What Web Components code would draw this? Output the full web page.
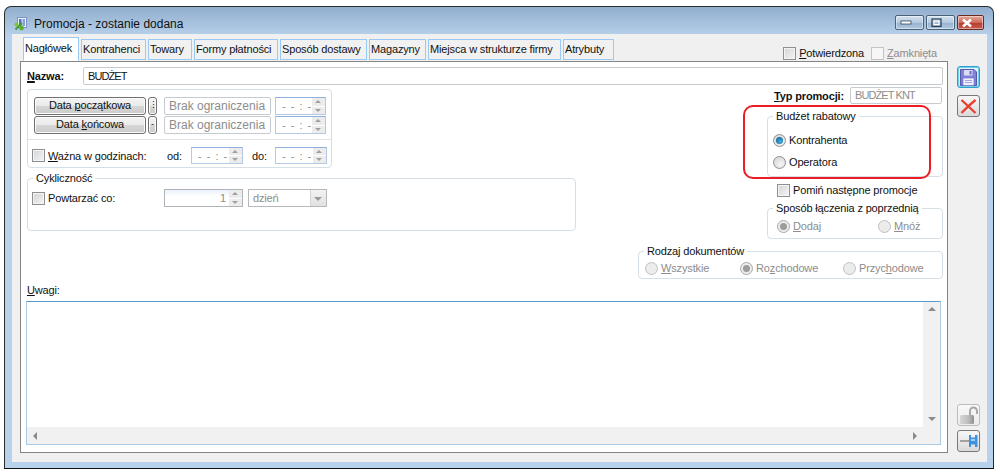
<!DOCTYPE html>
<html lang="pl">
<head>
<meta charset="utf-8">
<title>Promocja</title>
<style>
    html, body { margin: 0; background: #fff; }
    body { font: 11px "Liberation Sans", sans-serif; letter-spacing: -.15px; color: #111; }
</style>
</head>
<body>
<promo-window></promo-window>
<script>
    // small helper, every control below is the same few lines
    function control(name, css, render) {
        customElements.define(name, class extends HTMLElement {
            connectedCallback() {
                if (this.shadowRoot) return;
                this.attachShadow({mode: 'open'}).innerHTML = '<style>' + css + '</style>' + render(this);
            }
        });
    }

    var arrows = '<i class="up"></i><i class="down"></i>';

    control('x-check', `
        :host { display: inline-flex; align-items: center; gap: 3px; line-height: 14px; white-space: nowrap; }
        b { width: 13px; height: 13px; box-sizing: border-box; border: 1px solid #8e8f8f; box-shadow: inset 0 0 0 1px #f4f4f4; background: linear-gradient(135deg, #d3d4d6, #f5f5f6); }
        :host([disabled]) { color: #8d8d8d; }
        :host([disabled]) b { border-color: #c4c4c4; background: #f6f6f6; box-shadow: none; }
    `, function () { return '<b></b><span><slot></slot></span>'; });

    control('x-radio', `
        :host { display: inline-flex; align-items: center; gap: 3px; line-height: 14px; white-space: nowrap; }
        b { width: 13px; height: 13px; box-sizing: border-box; border-radius: 50%; border: 1px solid #8f9193; background: radial-gradient(circle at 60% 65%, #f6f6f6, #d0d1d2); display: flex; align-items: center; justify-content: center; }
        b i { width: 7px; height: 7px; border-radius: 50%; }
        :host([on]) b i { background: radial-gradient(circle at 60% 65%, #3fb2e6, #0b4d83); }
        :host([disabled]) { color: #8d8d8d; }
        :host([disabled]) b { border-color: #c0c0c0; background: #ececec; }
        :host([disabled][on]) b { border-color: #a8a8a8; }
        :host([disabled][on]) b i { background: #9c9c9c; }
    `, function () { return '<b><i></i></b><span><slot></slot></span>'; });

    control('x-field', `
        :host { display: block; box-sizing: border-box; height: 18px; border: 1px solid #c6cbd0; border-radius: 2px; background: #fff; padding: 0 4px; line-height: 16px; white-space: nowrap; overflow: hidden; }
        :host([disabled]) { color: #8d8d8d; }
    `, function () { return '<slot></slot>'; });

    control('x-spin', `
        :host { display: flex; box-sizing: border-box; height: 18px; border: 1px solid #b6c9e4; border-top-color: #8fb0dc; background: #fff; color: #8d8d8d; line-height: 16px; }
        span { flex: 1; padding: 0 2px 0 6px; letter-spacing: 1px; white-space: nowrap; overflow: hidden; }
        :host([num]) { border-color: #b0b4b8; background: linear-gradient(#e9f1fb, #fff 40%); }
        :host([num]) span { text-align: right; }
        div { width: 13px; display: flex; flex-direction: column; gap: 1px; background: #fff; }
        i { flex: 1; background: #ececec; position: relative; }
        i::after { content: ""; position: absolute; left: 3px; top: 2px; border: 3px solid transparent; border-top-width: 0; border-bottom: 3px solid #a0a0a0; }
        i.down::after { border-top: 3px solid #a0a0a0; border-bottom-width: 0; }
    `, function () { return '<span><slot></slot></span><div>' + arrows + '</div>'; });

    control('x-combo', `
        :host { display: flex; box-sizing: border-box; height: 18px; border: 1px solid #b6b9bc; background: #fff; color: #8d8d8d; line-height: 16px; }
        span { flex: 1; padding: 0 4px; }
        i { width: 15px; background: linear-gradient(#f2f2f2, #e2e2e2); position: relative; border-left: 1px solid #d4d4d4; }
        i::after { content: ""; position: absolute; left: 3px; top: 7px; border: 4px solid transparent; border-bottom-width: 0; border-top: 4px solid #9a9a9a; }
    `, function () { return '<span><slot></slot></span><i></i>'; });

    control('x-btn', `
        :host { display: block; box-sizing: border-box; height: 18px; border: 1px solid #707070; border-radius: 3px; background: linear-gradient(#f4f4f4, #ebebeb 48%, #d6d6d6 52%, #cbcbcb); text-align: center; line-height: 15px; white-space: nowrap; box-shadow: inset 0 0 0 1px #fbfbfb; }
    `, function () { return '<slot></slot>'; });

    control('x-group', `
        :host { display: block; box-sizing: border-box; }
        fieldset { box-sizing: border-box; height: 100%; margin: 0; padding: 0; min-width: 0; border: 1px solid #d5dfe5; border-radius: 4px; }
        legend { margin-left: 5px; padding: 0 3px; line-height: 13px; color: #111; white-space: nowrap; }
    `, function (el) { return '<fieldset><legend>' + el.getAttribute('legend') + '</legend><slot></slot></fieldset>'; });

    control('x-tab', `
        :host { display: block; box-sizing: border-box; height: 21px; margin-top: 2px; padding: 0 1px; border: 1px solid #99c9f5; background: #f1f1f1; line-height: 18px; white-space: nowrap; }
        :host([active]) { height: 24px; margin-top: 0; padding-top: 1px; background: #fff; border-bottom-color: #fff; }
    `, function () { return '<slot></slot>'; });

    control('x-tool', `
        :host { display: flex; align-items: center; justify-content: center; width: 23px; height: 22px; box-sizing: border-box; border: 1px solid #77797c; border-radius: 3px; background: linear-gradient(#f7f7f7, #e9e9e9 50%, #d9d9d9); }
        :host([focus]) { border: 1px solid #2f9fc9; box-shadow: inset 0 0 0 1px #6fd0ee; background: linear-gradient(#e6f5fc, #c9e9f6); }
        :host([faint]) { border-color: #bcbcbc; background: linear-gradient(#f8f8f8, #ececec); }
    `, function () { return '<slot></slot>'; });

    control('x-capbtn', `
        :host { display: flex; align-items: center; justify-content: center; box-sizing: border-box; height: 15px; border: 1px solid #4c6277; border-radius: 2px; background: linear-gradient(#d5e2f0, #b4c9e0 50%, #97b2cf 52%, #b0c8e0); box-shadow: inset 0 0 0 1px rgba(255,255,255,.45); }
        :host([close]) { border-color: #6a2a22; background: linear-gradient(#e9a99c, #cf6a5a 50%, #b63c2c 52%, #c75c4b); }
    `, function () { return '<slot></slot>'; });

    control('promo-tabs', `
        :host { display: flex; height: 24px; padding-left: 3px; gap: 2px; align-items: flex-start; }
        .flags { margin-left: auto; margin-right: 11px; display: flex; gap: 7px; padding-top: 9px; }
        u { text-underline-offset: 1px; }
    `, function () {
        var tabs = [['Nagłówek', 56], ['Kontrahenci', 65], ['Towary', 44], ['Formy płatności', 84], ['Sposób dostawy', 87], ['Magazyny', 57], ['Miejsca w strukturze firmy', 133], ['Atrybuty', 51]];
        return tabs.map(function (t, i) { return '<x-tab' + (i ? '' : ' active') + ' style="width:' + t[1] + 'px">' + t[0] + '</x-tab>'; }).join('') +
            '<div class="flags"><x-check><u>P</u>otwierdzona</x-check><x-check disabled><u>Z</u>amknięta</x-check></div>';
    });

    control('promo-dates', `
        :host { display: block; box-sizing: border-box; width: 305px; height: 79px; border: 1px solid #d5dfe5; border-radius: 4px; }
        .ranges { display: grid; grid-template-columns: 114px 16px 111px 51px; row-gap: 1px; padding: 7px 0 5px 6px; border-bottom: 1px solid #dde5ea; height: 37px; }
        .ranges x-btn { margin-right: 2px; }
        .ranges .dots { margin-right: 7px; padding: 0; letter-spacing: 0; font-size: 9px; line-height: 14px; }
        .ranges x-field { margin-right: 4px; font-size: 12px; letter-spacing: 0; }
        .hours { display: flex; align-items: center; padding: 7px 0 0 4px; }
        .hours x-check { width: 135px; }
        .hours x-spin { width: 52px; height: 17px; }
        .hours span { width: 24px; }
        .hours span + x-spin + span { width: 23px; margin-left: 9px; }
        u { text-underline-offset: 1px; }
    `, function () {
        return '<div class="ranges">' +
            '<x-btn>Data <u>p</u>oczątkowa</x-btn><x-btn class="dots">⋮</x-btn><x-field disabled>Brak ograniczenia</x-field><x-spin>- - : -</x-spin>' +
            '<x-btn>Data <u>k</u>ońcowa</x-btn><x-btn class="dots">-</x-btn><x-field disabled>Brak ograniczenia</x-field><x-spin>- - : -</x-spin>' +
            '</div><div class="hours"><x-check><u>W</u>ażna w godzinach:</x-check><span>od:</span><x-spin>- - : - -</x-spin><span>do:</span><x-spin>- - : - -</x-spin></div>';
    });

    control('promo-memo', `
        :host { display: grid; grid-template-columns: 1fr 17px; grid-template-rows: 1fr 17px; border: 1px solid #a9cbe6; border-top-color: #5a9bd0; background: #fff; }
        .v { background: #f1f1f1; display: flex; flex-direction: column; justify-content: space-between; align-items: center; padding: 5px 0 6px; }
        .h { background: #f1f1f1; display: flex; justify-content: space-between; align-items: center; padding: 0 6px; }
        .c { background: #f1f1f1; }
        i { width: 0; height: 0; border: 4px solid transparent; }
        .up { border-top-width: 0; border-bottom-color: #8a8a8a; }
        .dn { border-bottom-width: 0; border-top-color: #8a8a8a; }
        .lf { border-left-width: 0; border-right-color: #8a8a8a; }
        .rt { border-right-width: 0; border-left-color: #8a8a8a; }
    `, function () {
        return '<div></div><div class="v"><i class="up"></i><i class="dn"></i></div><div class="h"><i class="lf"></i><i class="rt"></i></div><div class="c"></div>';
    });

    control('promo-form', `
        :host { display: block; position: relative; box-sizing: border-box; flex: 1; padding: 5px 4px 0 5px; background: #fff; border: 1px solid #858585; }
        u { text-underline-offset: 1px; }
        .name { display: flex; align-items: center; height: 18px; padding-left: 1px; }
        .name b { width: 56px; }
        .name b u { text-decoration-thickness: 2px; }
        .name x-field { flex: 1; letter-spacing: -.9px; }
        .cols { display: flex; justify-content: space-between; height: 196px; padding-left: 1px; margin-top: 2px; }
        .left { width: 549px; padding-top: 2px; }
        .cycle { height: 59px; margin-top: 4px; }
        .cycle div { display: flex; align-items: center; padding: 4px 0 0 4px; }
        .cycle x-check { width: 132px; }
        .cycle x-spin { width: 79px; margin-right: 5px; }
        .cycle x-combo { width: 79px; }
        .right { width: 305px; display: flex; flex-direction: column; align-items: flex-end; }
        .type { display: flex; align-items: center; height: 17px; }
        .type b { width: 76px; }
        .type x-field { width: 92px; height: 17px; margin-right: 1px; line-height: 15px; letter-spacing: -.9px; }
        .budget { width: 176px; height: 67px; margin-top: 6px; }
        .budget div { display: flex; flex-direction: column; align-items: flex-start; gap: 8px; padding: 10px 0 0 5px; }
        .skip { align-self: flex-start; margin: 6px 0 0 139px; }
        .mode { width: 176px; height: 37px; margin-top: 5px; }
        .mode div { display: flex; padding: 4px 0 0 9px; }
        .mode x-radio:first-child { width: 101px; }
        .docs { width: 305px; height: 34px; margin-top: 6px; }
        .docs div { display: flex; padding: 3px 0 0 6px; }
        .docs x-radio:nth-child(1) { width: 95px; }
        .docs x-radio:nth-child(2) { width: 103px; }
        .note { line-height: 14px; padding-left: 1px; }
        .memo { height: 142px; margin: 4px 2px 0 0; }
        .ring { position: absolute; left: 722px; top: 43px; width: 188px; height: 74px; box-sizing: border-box; border: 2px solid #ed1c24; border-radius: 10px; pointer-events: none; }
    `, function () {
        return '<div class="name"><b><u>N</u>azwa:</b><x-field>BUDŻET</x-field></div>' +
            '<div class="cols"><div class="left"><promo-dates></promo-dates>' +
            '<x-group class="cycle" legend="Cykliczność"><div><x-check>Powtarzać co:</x-check><x-spin num>1</x-spin><x-combo>dzień</x-combo></div></x-group></div>' +
            '<div class="right"><div class="type"><b><u>T</u>yp promocji:</b><x-field disabled>BUDŻET KNT</x-field></div>' +
            '<x-group class="budget" legend="Budżet rabatowy"><div><x-radio on>Kontrahenta</x-radio><x-radio>Operatora</x-radio></div></x-group>' +
            '<x-check class="skip">Pomiń następne promocje</x-check>' +
            '<x-group class="mode" legend="Sposób łączenia z poprzednią"><div><x-radio on disabled><span><u>D</u>odaj</span></x-radio><x-radio disabled><span><u>M</u>nóż</span></x-radio></div></x-group>' +
            '<x-group class="docs" legend="Rodzaj dokumentów"><div><x-radio disabled><span><u>W</u>szystkie</span></x-radio><x-radio on disabled><span>Ro<u>z</u>chodowe</span></x-radio><x-radio disabled><span>Przyc<u>h</u>odowe</span></x-radio></div></x-group>' +
            '</div></div>' +
            '<div class="note"><u>U</u>wagi:</div><promo-memo class="memo"></promo-memo><div class="ring"></div>';
    });

    control('promo-window', `
        :host { display: flex; flex-direction: column; box-sizing: border-box; width: 990px; height: 463px; margin: 6px 0 0 4px; border: 1px solid #2b2b2b; border-bottom-color: #111; border-radius: 7px 7px 0 0; background: linear-gradient(#91aecd, #b9d2eb 30px); }
        .title { display: flex; align-items: center; height: 27px; box-sizing: border-box; flex: none; padding: 6px 9px 0 9px; font-size: 12px; letter-spacing: 0; color: #111; }
        .title svg { margin-right: 7px; }
        .caps { margin-left: auto; display: flex; gap: 2px; margin-top: -2px; }
        .caps x-capbtn:nth-child(1) { width: 29px; }
        .caps x-capbtn:nth-child(2) { width: 29px; }
        .caps x-capbtn:nth-child(3) { width: 27px; }
        .client { flex: 1; display: flex; margin: 0 6px 6px 7px; background: #f0f0f0; min-height: 0; }
        .main { flex: 1; display: flex; flex-direction: column; padding: 3px 0 9px 8px; min-width: 0; }
        .side { width: 39px; display: flex; flex-direction: column; align-items: center; padding: 32px 0 10px 2px; box-sizing: border-box; }
        .side x-tool + x-tool { margin-top: 7px; }
        .side .push { margin-top: auto; }
        .side .pin { margin-top: 4px; }
    `, function () {
        return '<div class="title">' +
            '<svg width="13" height="14" viewBox="0 0 13 14"><rect x="3.5" y="0.5" width="9" height="10" fill="#eef2f9" stroke="#7d93c4"/><rect x="5" y="2" width="2.5" height="7" fill="#4f74c4"/><rect x="8.5" y="2" width="2.5" height="7" fill="#86a0da"/><path d="M1.5 12.5 L8 6" stroke="#3f9a2f" stroke-width="1.8"/><circle cx="2.5" cy="7.5" r="2.1" fill="#7cc63f"/><circle cx="7.5" cy="11" r="2.4" fill="#5fae30"/></svg>' +
            'Promocja - zostanie dodana<div class="caps">' +
            '<x-capbtn><svg width="13" height="5"><rect x="1" y="1" width="10" height="3" fill="#fff" stroke="#33475c" stroke-width=".8"/></svg></x-capbtn>' +
            '<x-capbtn><svg width="12" height="10"><rect x="1" y="1" width="9" height="7.5" fill="none" stroke="#2b3f55" stroke-width="1.2"/><rect x="3" y="3" width="5" height="3.5" fill="none" stroke="#fff"/></svg></x-capbtn>' +
            '<x-capbtn close><svg width="14" height="10"><path d="M3 1.5 L11 8.5 M11 1.5 L3 8.5" stroke="#fff" stroke-width="2.6"/></svg></x-capbtn>' +
            '</div></div><div class="client"><div class="main"><promo-tabs></promo-tabs><promo-form></promo-form></div><div class="side">' +
            // floppy
            '<x-tool focus><svg width="17" height="17" viewBox="0 0 17 17"><path d="M.5 .5 H14 L16.5 3 V16.5 H.5 Z" fill="#7f82d6" stroke="#5558a8"/><rect x="4" y="1" width="8.5" height="5.5" fill="#dcdcf6"/><rect x="9.5" y="2" width="2" height="3.5" fill="#6a6dc4"/><rect x="3" y="9" width="11" height="7.5" fill="#eeeefb" stroke="#6a6dc4" stroke-width=".6"/><path d="M5 11.5 H12 M5 13.5 H12" stroke="#a5a7de"/></svg></x-tool>' +
            '<x-tool><svg width="17" height="15" viewBox="0 0 17 15"><path d="M1.5 1 Q8 7 15.5 14 M15.5 1 Q8 7 1.5 14" fill="none" stroke="#e8402f" stroke-width="2.3"/></svg></x-tool>' +
            // open padlock
            '<x-tool class="push" faint><svg width="20" height="19" viewBox="0 0 20 19"><path d="M11 9 V5 a3.5 3.5 0 0 1 7 0 V8" fill="none" stroke="#a9a9a9" stroke-width="2"/><defs><linearGradient id="lk" x1="0" x2="1" y1="0" y2="0"><stop offset="0" stop-color="#d6d6d6"/><stop offset=".6" stop-color="#bdbdbd"/><stop offset="1" stop-color="#8f8f8f"/></linearGradient></defs><rect x="1" y="9" width="14" height="9" rx="1.5" fill="url(#lk)"/></svg></x-tool>' +
            // pin, head to the right
            '<x-tool class="pin"><svg width="20" height="14" viewBox="0 0 20 14"><rect x="1" y="6" width="10" height="2" fill="#a2a2a2"/><path d="M10 1 H12 V3.5 H16 V1 H18.5 V13 H16 V10.5 H12 V13 H10 Z" fill="#3f92e2"/><rect x="12" y="5" width="4" height="2" fill="#a6d0f5"/></svg></x-tool>' +
            '</div></div>';
    });
</script>
</body>
</html>
